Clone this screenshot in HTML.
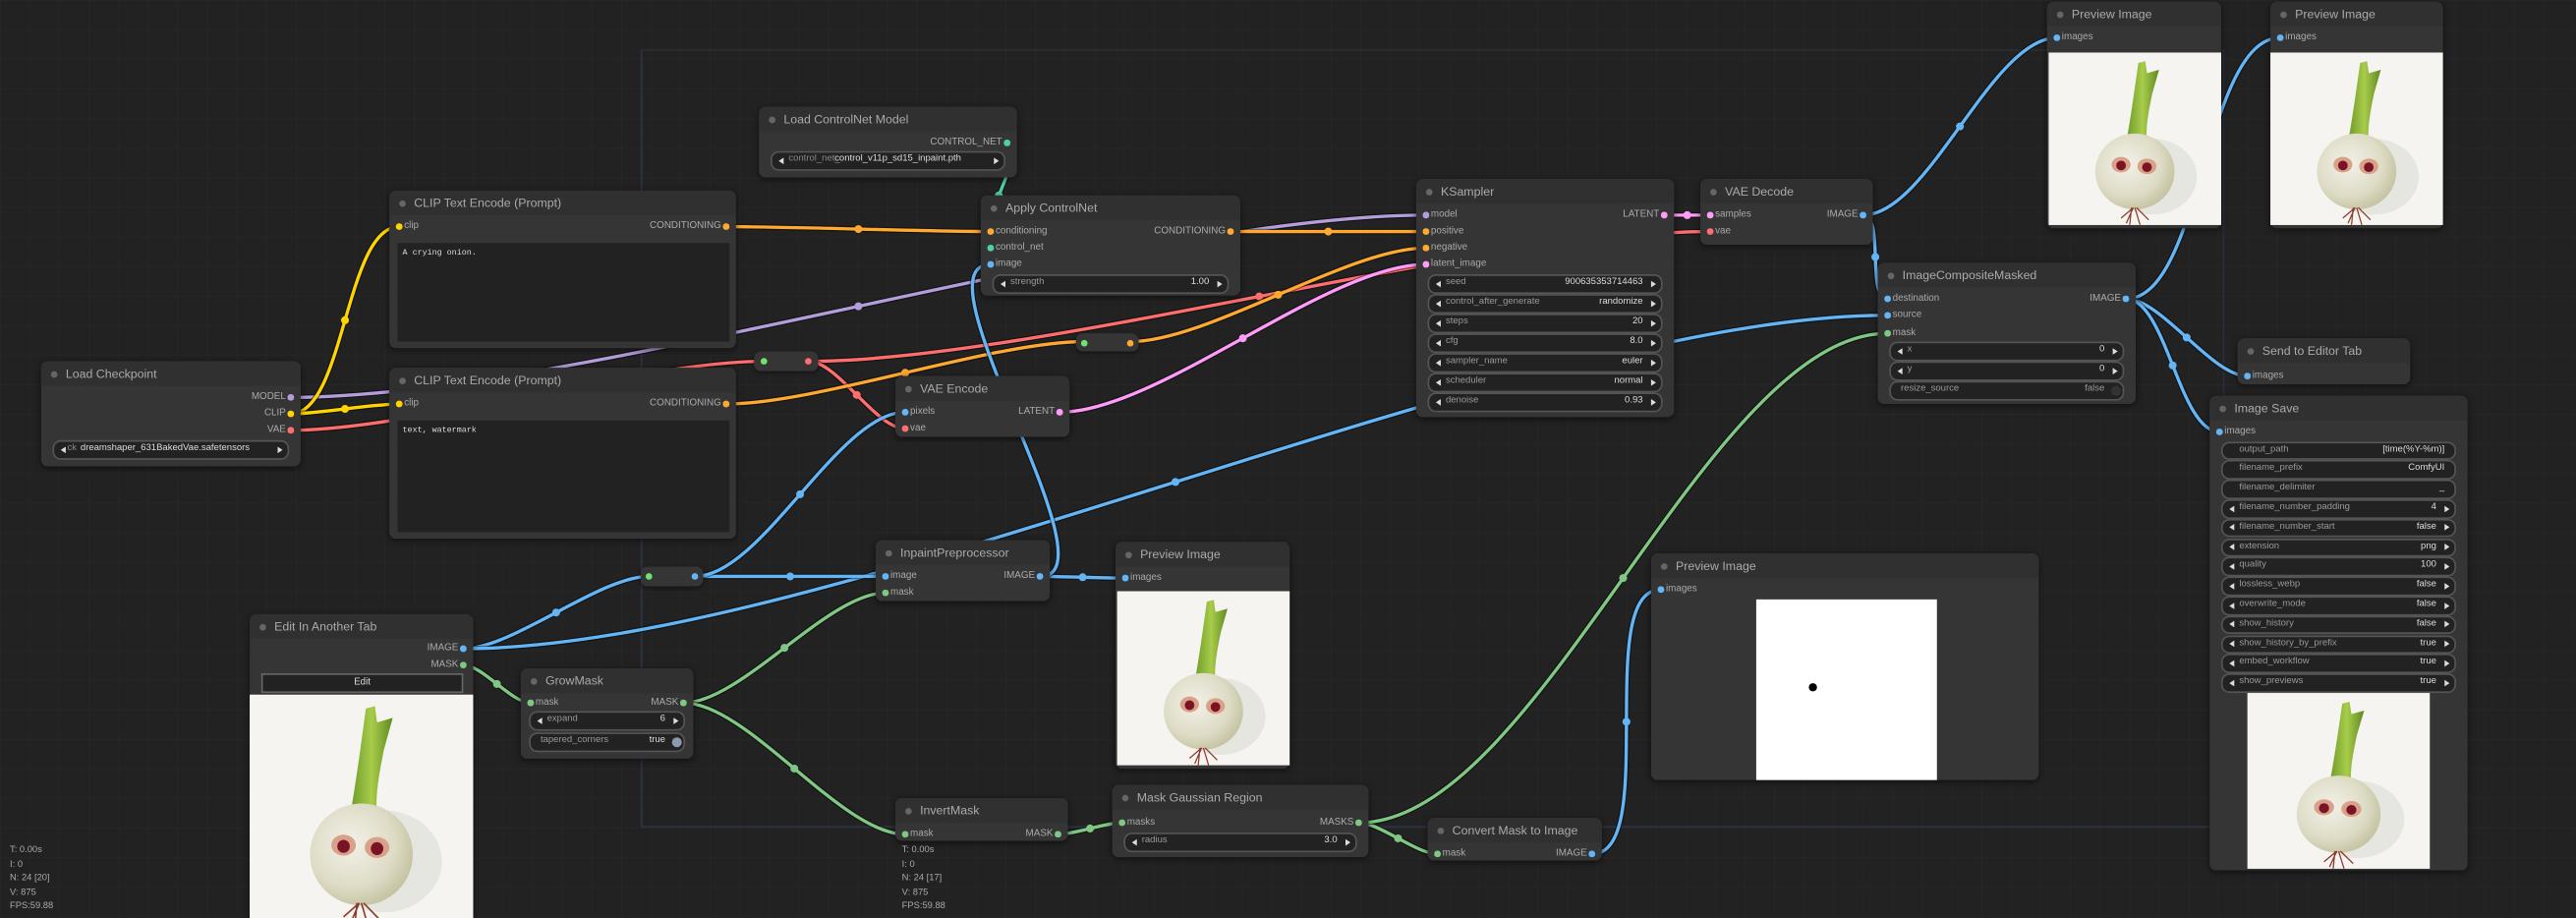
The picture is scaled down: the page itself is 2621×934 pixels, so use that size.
<!DOCTYPE html>
<html><head><meta charset="utf-8"><style>
html,body{margin:0;padding:0;background:#222;overflow:hidden}
body{width:2621px;height:934px}
#s{position:absolute;left:0;top:0;width:1568px;height:559px;transform:scale(1.67156,1.67084);transform-origin:0 0;font-family:"Liberation Sans",sans-serif;overflow:hidden;
background-color:#222;background-image:linear-gradient(#262626 0.6px,transparent 0.6px),linear-gradient(90deg,#262626 0.6px,transparent 0.6px);background-size:18px 18px}
svg#links{position:absolute;left:0;top:0}
.node{position:absolute;background:#353535;border-radius:4px;box-shadow:0 1px 4px rgba(0,0,0,.55)}
.t{position:absolute;left:0;top:0;right:0;height:15px;background:#303030;border-radius:4px 4px 0 0;color:#aaa;font-size:7.4px;line-height:15px;padding-left:15px;white-space:nowrap}
.t::before{content:'';position:absolute;left:5.5px;top:5.5px;width:4px;height:4px;border-radius:50%;background:#666}
.i,.o{position:absolute;font-size:5.9px;color:#aaa;line-height:8px;white-space:nowrap}
.i{left:3px;padding-left:6px}
.o{right:3px;padding-right:6px}
.i::before,.o::after{content:'';position:absolute;top:2.2px;width:3.6px;height:3.6px;border-radius:50%;background:var(--c)}
.i::before{left:1px}.o::after{right:1px}
.w{position:absolute;left:7px;right:7px;height:9.5px;background:#222;border:0.6px solid #555;border-radius:5px;font-size:5.7px;color:#999;white-space:nowrap}
.w span{position:absolute;top:0;height:9.5px;line-height:9.5px}
.w .l{left:10px}.w .v{right:11px;color:#ddd}
.w.n .l{left:6px}.w.n .v{right:6px}
.w.a::before,.w.a::after{content:'';position:absolute;top:2.7px;border-top:2.1px solid transparent;border-bottom:2.1px solid transparent}
.w.a::before{left:3.5px;border-right:3px solid #ddd}
.w.a::after{right:3.5px;border-left:3px solid #ddd}
.ta{position:absolute;left:5px;right:4px;background:#222;font-family:"Liberation Mono",monospace;font-size:5px;color:#ddd;padding:3px 3px}
.rr{position:absolute;background:#353535;border-radius:4px;box-shadow:0 1px 3px rgba(0,0,0,.5)}
.rr b{position:absolute;top:4px;width:4px;height:4px;border-radius:50%}
.img{position:absolute;overflow:hidden;background:#f3f2ee}
.stats{position:absolute;font-size:5.6px;color:#aaa;line-height:8.6px}
</style></head><body><div id="s">
<div style="position:absolute;left:390px;top:30px;width:962px;height:472px;border:0.6px solid rgba(70,90,150,.3);border-top-color:rgba(90,90,90,.2);border-right-color:rgba(70,90,150,.2)"></div>
<svg width="0" height="0" style="position:absolute">
<defs>
<radialGradient id="bulb" cx="40%" cy="40%" r="70%"><stop offset="0" stop-color="#f2f1e8"/><stop offset=".6" stop-color="#dedcc6"/><stop offset="1" stop-color="#bdbb96"/></radialGradient>
<linearGradient id="stem" x1="0" x2="1"><stop offset="0" stop-color="#6e9a2a"/><stop offset=".5" stop-color="#a8cc4a"/><stop offset="1" stop-color="#5f8a22"/></linearGradient>
<symbol id="onion" viewBox="0 0 100 100" preserveAspectRatio="none">
<rect width="100" height="100" fill="#f5f4f0"/>
<ellipse cx="60" cy="72" rx="26" ry="22" fill="#dcdcd6" opacity=".6"/>
<path d="M45 52 C48 35 50 20 52 6 L56 5 L57 12 L64 10 L60 24 C58 34 56 44 57 52 Z" fill="url(#stem)"/>
<ellipse cx="50" cy="69" rx="23" ry="22" fill="url(#bulb)"/>
<ellipse cx="42" cy="65" rx="5.5" ry="4.5" fill="#d9a08a"/><ellipse cx="57" cy="66" rx="5.5" ry="4.5" fill="#d9a08a"/>
<circle cx="42" cy="65.5" r="2.8" fill="#7a1424"/><circle cx="57" cy="66.5" r="2.8" fill="#7a1424"/>
<path d="M49 90 L45 99 M50 90 L53 100 M49 90 L42 96 M51 90 L58 97 M48 90 L47 100" stroke="#8a3a2a" stroke-width=".7" fill="none"/>
</symbol>
</defs></svg>
<svg id="links" width="1568" height="559"></svg>

<div class="node" style="left:25px;top:220px;width:158px;height:64px"><div class="t">Load Checkpoint</div>
<span class="o" style="top:18px;--c:#b39ddb">MODEL</span><span class="o" style="top:28px;--c:#ffd500">CLIP</span><span class="o" style="top:38px;--c:#ff6e6e">VAE</span>
<div class="w a" style="top:48px"><span class="l" style="left:8px;color:#888">ck</span><span class="v" style="right:auto;left:16px">dreamshaper_631BakedVae.safetensors</span></div></div>

<div class="node" style="left:237px;top:116px;width:211px;height:96px"><div class="t">CLIP Text Encode (Prompt)</div>
<span class="i" style="top:18px;--c:#ffd500">clip</span><span class="o" style="top:18px;--c:#ffa931">CONDITIONING</span>
<div class="ta" style="top:32px;height:54px">A crying onion.</div></div>

<div class="node" style="left:237px;top:224px;width:211px;height:104px"><div class="t">CLIP Text Encode (Prompt)</div>
<span class="i" style="top:18px;--c:#ffd500">clip</span><span class="o" style="top:18px;--c:#ffa931">CONDITIONING</span>
<div class="ta" style="top:32px;height:62px">text, watermark</div></div>

<div class="node" style="left:462px;top:65px;width:157px;height:43px"><div class="t">Load ControlNet Model</div>
<span class="o" style="top:18px;--c:#4fd0a0">CONTROL_NET</span>
<div class="w a" style="top:27px"><span class="l" style="color:#888">control_net_</span><span class="v" style="right:auto;left:38px">control_v11p_sd15_inpaint.pth</span></div></div>

<div class="node" style="left:597px;top:119px;width:158px;height:61px"><div class="t">Apply ControlNet</div>
<span class="i" style="top:18px;--c:#ffa931">conditioning</span><span class="i" style="top:28px;--c:#4fd0a0">control_net</span><span class="i" style="top:38px;--c:#64b5f6">image</span>
<span class="o" style="top:18px;--c:#ffa931">CONDITIONING</span>
<div class="w a" style="top:48px"><span class="l">strength</span><span class="v">1.00</span></div></div>

<div class="node" style="left:545px;top:229px;width:106px;height:37px"><div class="t">VAE Encode</div>
<span class="i" style="top:18px;--c:#64b5f6">pixels</span><span class="i" style="top:28px;--c:#ff6e6e">vae</span><span class="o" style="top:18px;--c:#ff9cf9">LATENT</span></div>

<div class="node" style="left:862px;top:109px;width:157px;height:145px"><div class="t">KSampler</div>
<span class="i" style="top:18px;--c:#b39ddb">model</span><span class="i" style="top:28px;--c:#ffa931">positive</span><span class="i" style="top:38px;--c:#ffa931">negative</span><span class="i" style="top:48px;--c:#ff9cf9">latent_image</span>
<span class="o" style="top:18px;--c:#ff9cf9">LATENT</span>
<div class="w a" style="top:58px"><span class="l">seed</span><span class="v">900635353714463</span></div>
<div class="w a" style="top:70px"><span class="l">control_after_generate</span><span class="v">randomize</span></div>
<div class="w a" style="top:82px"><span class="l">steps</span><span class="v">20</span></div>
<div class="w a" style="top:94px"><span class="l">cfg</span><span class="v">8.0</span></div>
<div class="w a" style="top:106px"><span class="l">sampler_name</span><span class="v">euler</span></div>
<div class="w a" style="top:118px"><span class="l">scheduler</span><span class="v">normal</span></div>
<div class="w a" style="top:130px"><span class="l">denoise</span><span class="v">0.93</span></div></div>

<div class="node" style="left:1035px;top:109px;width:105px;height:40px"><div class="t">VAE Decode</div>
<span class="i" style="top:18px;--c:#ff9cf9">samples</span><span class="i" style="top:28px;--c:#ff6e6e">vae</span><span class="o" style="top:18px;--c:#64b5f6">IMAGE</span></div>

<div class="node" style="left:1246px;top:1px;width:106px;height:138px"><div class="t">Preview Image</div>
<span class="i" style="top:18px;--c:#64b5f6">images</span>
<svg class="img" style="left:1px;top:31px;width:105px;height:105px"><use href="#onion" width="105" height="105"/></svg></div>

<div class="node" style="left:1382px;top:1px;width:105px;height:138px"><div class="t">Preview Image</div>
<span class="i" style="top:18px;--c:#64b5f6">images</span>
<svg class="img" style="left:0px;top:31px;width:105px;height:105px"><use href="#onion" width="105" height="105"/></svg></div>

<div class="node" style="left:1143px;top:160px;width:157px;height:86px"><div class="t">ImageCompositeMasked</div>
<span class="i" style="top:18px;--c:#64b5f6">destination</span><span class="i" style="top:28px;--c:#64b5f6">source</span><span class="i" style="top:39px;--c:#81c784">mask</span>
<span class="o" style="top:18px;--c:#64b5f6">IMAGE</span>
<div class="w a" style="top:48px"><span class="l">x</span><span class="v">0</span></div>
<div class="w a" style="top:60px"><span class="l">y</span><span class="v">0</span></div>
<div class="w n" style="top:72px"><span class="l">resize_source</span><span class="v" style="right:11px;color:#999">false</span><b style="position:absolute;right:1.5px;top:1.5px;width:6px;height:6px;border-radius:50%;background:#333"></b></div></div>

<div class="node" style="left:1362px;top:206px;width:105px;height:28px"><div class="t">Send to Editor Tab</div>
<span class="i" style="top:19px;--c:#64b5f6">images</span></div>

<div class="node" style="left:1345px;top:241px;width:157px;height:289px"><div class="t">Image Save</div>
<span class="i" style="top:18px;--c:#64b5f6">images</span>
<div class="w" style="top:27.6px"><span class="l">output_path</span><span class="v" style="right:6px">[time(%Y-%m)]</span></div>
<div class="w" style="top:39.4px"><span class="l">filename_prefix</span><span class="v" style="right:6px">ComfyUI</span></div>
<div class="w" style="top:51.2px"><span class="l">filename_delimiter</span><span class="v" style="right:6px">_</span></div>
<div class="w a" style="top:63px"><span class="l">filename_number_padding</span><span class="v">4</span></div>
<div class="w a" style="top:74.8px"><span class="l">filename_number_start</span><span class="v">false</span></div>
<div class="w a" style="top:86.6px"><span class="l">extension</span><span class="v">png</span></div>
<div class="w a" style="top:98.4px"><span class="l">quality</span><span class="v">100</span></div>
<div class="w a" style="top:110.2px"><span class="l">lossless_webp</span><span class="v">false</span></div>
<div class="w a" style="top:122px"><span class="l">overwrite_mode</span><span class="v">false</span></div>
<div class="w a" style="top:133.8px"><span class="l">show_history</span><span class="v">false</span></div>
<div class="w a" style="top:145.6px"><span class="l">show_history_by_prefix</span><span class="v">true</span></div>
<div class="w a" style="top:157.4px"><span class="l">embed_workflow</span><span class="v">true</span></div>
<div class="w a" style="top:169.2px"><span class="l">show_previews</span><span class="v">true</span></div>
<svg class="img" style="left:23px;top:181px;width:111px;height:107px"><use href="#onion" width="111" height="107"/></svg></div>

<div class="node" style="left:533px;top:329px;width:106px;height:37px"><div class="t">InpaintPreprocessor</div>
<span class="i" style="top:18px;--c:#64b5f6">image</span><span class="i" style="top:28px;--c:#81c784">mask</span><span class="o" style="top:18px;--c:#64b5f6">IMAGE</span></div>

<div class="node" style="left:679px;top:330px;width:106px;height:138px"><div class="t">Preview Image</div>
<span class="i" style="top:18px;--c:#64b5f6">images</span>
<svg class="img" style="left:1px;top:30px;width:105px;height:106px"><use href="#onion" width="105" height="106"/></svg></div>

<div class="node" style="left:152px;top:374px;width:136px;height:190px"><div class="t">Edit In Another Tab</div>
<span class="o" style="top:17px;--c:#64b5f6">IMAGE</span><span class="o" style="top:27px;--c:#81c784">MASK</span>
<div style="position:absolute;left:7px;top:36px;width:121px;height:10px;background:#222;border:0.7px solid #666;color:#ddd;font-size:5.8px;line-height:10px;text-align:center">Edit</div>
<svg class="img" style="left:0;top:49px;width:136px;height:141px"><use href="#onion" width="136" height="141"/></svg></div>

<div class="node" style="left:317px;top:407px;width:105px;height:55px"><div class="t">GrowMask</div>
<span class="i" style="top:17px;--c:#81c784">mask</span><span class="o" style="top:17px;--c:#81c784">MASK</span>
<div class="w a" style="top:26px;left:5px;right:5px"><span class="l">expand</span><span class="v">6</span></div>
<div class="w n" style="top:39px;left:5px;right:5px"><span class="l">tapered_corners</span><span class="v" style="right:11px">true</span><b style="position:absolute;right:1.5px;top:1.5px;width:6px;height:6px;border-radius:50%;background:#8a9bb0"></b></div></div>

<div class="node" style="left:545px;top:486px;width:105px;height:26px"><div class="t">InvertMask</div>
<span class="i" style="top:18px;--c:#81c784">mask</span><span class="o" style="top:18px;--c:#81c784">MASK</span></div>

<div class="node" style="left:677px;top:478px;width:156px;height:44px"><div class="t">Mask Gaussian Region</div>
<span class="i" style="top:19px;--c:#81c784">masks</span><span class="o" style="top:19px;--c:#81c784">MASKS</span>
<div class="w a" style="top:29px"><span class="l">radius</span><span class="v">3.0</span></div></div>

<div class="node" style="left:869px;top:498px;width:106px;height:26px"><div class="t">Convert Mask to Image</div>
<span class="i" style="top:18px;--c:#81c784">mask</span><span class="o" style="top:18px;--c:#64b5f6">IMAGE</span></div>

<div class="node" style="left:1005px;top:337px;width:236px;height:138px"><div class="t">Preview Image</div>
<span class="i" style="top:18px;--c:#64b5f6">images</span>
<div class="img" style="left:64px;top:28px;width:110px;height:110px;background:#fff"><div style="position:absolute;left:32px;top:51px;width:5px;height:5px;border-radius:50%;background:#000"></div></div></div>

<div class="rr" style="left:459px;top:214px;width:39px;height:12px"><b style="left:4px;background:#6fe36f"></b><b style="left:31px;background:#ff6e6e"></b></div>
<div class="rr" style="left:655px;top:203px;width:38px;height:11px"><b style="left:3px;top:3.5px;background:#6fe36f"></b><b style="left:31px;top:3.5px;background:#ffa931"></b></div>
<div class="rr" style="left:390px;top:345px;width:38px;height:12px"><b style="left:3px;background:#6fe36f"></b><b style="left:31px;background:#64b5f6"></b></div>

<div class="stats" style="left:6px;top:514px">T: 0.00s<br>I: 0<br>N: 24 [20]<br>V: 875<br>FPS:59.88</div>
<div class="stats" style="left:549px;top:514px">T: 0.00s<br>I: 0<br>N: 24 [17]<br>V: 875<br>FPS:59.88</div>
</div>
<script>
var P='#b39ddb',Y='#ffd500',R='#ff6e6e',O='#ffa931',T='#4fd0a0',K='#ff9cf9',B='#64b5f6',G='#81c784';
var L=[
[177,242,868,131,P],[177,252,243,138,Y],[177,252,243,246,Y],[177,262,465,220,R],
[492,220,1041,141,R],[492,220,551,261,R],[442,138,603,141,O],[749,141,868,141,O],
[442,246,660,208,O],[688,208,868,151,O],[613,87,603,151,T],[645,251,868,161,K],
[1013,131,1041,131,K],[1134,131,1252,23,B],[1134,131,1149,182,B],[1294,182,1388,23,B],
[1294,182,1368,229,B],[1294,182,1351,263,B],[282,395,395,351,B],[282,395,1149,192,B],
[423,351,539,351,B],[423,351,551,251,B],[633,351,685,352,B],[633,351,603,161,B],
[282,405,323,428,G],[416,428,539,361,G],[416,428,551,508,G],[644,508,683,501,G],
[827,501,875,520,G],[827,501,1149,203,G],[969,520,1011,359,B]];
var s='';
L.forEach(function(l){var x1=l[0],y1=l[1],x2=l[2],y2=l[3],c=l[4];
var d=Math.hypot(x2-x1,y2-y1)*0.25;
var p='M'+x1+' '+y1+' C'+(x1+d)+' '+y1+' '+(x2-d)+' '+y2+' '+x2+' '+y2;
s+='<path d="'+p+'" stroke="rgba(0,0,0,.45)" stroke-width="3.4" fill="none"/>';
s+='<path d="'+p+'" stroke="'+c+'" stroke-width="2" fill="none"/>';
var mx=(x1+3*(x1+d)+3*(x2-d)+x2)/8,my=(y1+3*y1+3*y2+y2)/8;
s+='<circle cx="'+mx+'" cy="'+my+'" r="2.4" fill="'+c+'"/>';});
document.getElementById('links').innerHTML=s;
</script>
</body></html>
